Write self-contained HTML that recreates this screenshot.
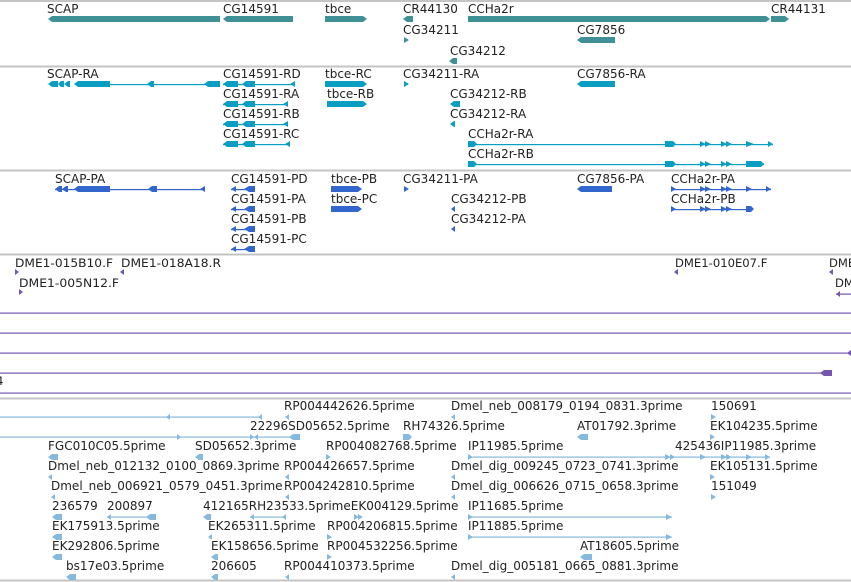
<!DOCTYPE html>
<html><head><meta charset="utf-8"><style>
html,body{margin:0;padding:0;background:#fff;width:851px;height:582px;overflow:hidden}
svg{display:block}
text{font-family:"DejaVu Sans","Liberation Sans",sans-serif;font-size:12px;fill:#222}
.c{font-size:11.6px}
</style></head><body>
<svg width="851" height="582" viewBox="0 0 851 582" xmlns="http://www.w3.org/2000/svg">
<defs>
<polygon id="ar" points="0,-3 5,0 0,3"/>
<polygon id="al" points="5,-3 0,0 5,3"/>
</defs>
<!-- track separators -->
<g stroke="#c4c4c4" stroke-width="2">
<line x1="0" y1="1" x2="851" y2="1"/>
<line x1="0" y1="66.5" x2="851" y2="66.5"/>
<line x1="0" y1="170.5" x2="851" y2="170.5"/>
<line x1="0" y1="254.5" x2="851" y2="254.5"/>
<line x1="0" y1="398.5" x2="851" y2="398.5"/>
<line x1="0" y1="580.5" x2="851" y2="580.5"/>
</g>

<!-- TRACK 1 teal -->
<g fill="#3f9196">
<polygon points="52,16 220,16 220,22 52,22 48,19"/>
<polygon points="227,16 293,16 293,22 227,22 223,19"/>
<polygon points="325,16 363,16 367,19 363,22 325,22"/>
<polygon points="407,16 413,16 413,22 407,22 403,19"/>
<polygon points="404,37 409,40 404,43"/>
<polygon points="468,16 766,16 770,19 766,22 468,22"/>
<polygon points="771,16 785,16 789,19 785,22 771,22"/>
<polygon points="581,37 615,37 615,43 581,43 577,40"/>
<polygon points="453,58 457,58 457,64 453,64 449,61"/>
</g>
<text x="47" y="13">SCAP</text>
<text x="223" y="13">CG14591</text>
<text x="325" y="13">tbce</text>
<text x="403" y="13">CR44130</text>
<text x="468" y="13">CCHa2r</text>
<text x="771" y="13">CR44131</text>
<text x="403" y="34">CG34211</text>
<text x="577" y="34">CG7856</text>
<text x="450" y="55">CG34212</text>

<!-- TRACK 2 cyan -->
<g fill="#0a9fc2" stroke="none">
<rect x="110" y="84" width="110" height="1.2"/>
<polygon points="52,81 58,81 58,87 52,87 48,84"/>
<polygon points="61,81 64,81 64,87 61,87 58,84"/>
<polygon points="68,81 70,81 70,87 68,87 64,84"/>
<polygon points="78,81 110,81 110,87 78,87 74,84"/>
<polygon points="151,81 154,81 154,87 151,87 147,84"/>
<polygon points="208,81 220,81 220,87 208,87 204,84"/>
<rect x="223" y="84" width="72" height="1.2"/><polygon points="227,81 238,81 238,87 227,87 223,84"/><polygon points="246,81 255,81 255,87 246,87 242,84"/><polygon points="290,84 295,81 295,87"/>
<rect x="223" y="104" width="65" height="1.2"/><polygon points="227,101 238,101 238,107 227,107 223,104"/><polygon points="246,101 255,101 255,107 246,107 242,104"/><polygon points="283,104 288,101 288,107"/>
<rect x="223" y="124" width="65" height="1.2"/><polygon points="227,121 238,121 238,127 227,127 223,124"/><polygon points="246,121 255,121 255,127 246,127 242,124"/><polygon points="283,124 288,121 288,127"/>
<rect x="223" y="144" width="67" height="1.2"/><polygon points="227,141 238,141 238,147 227,147 223,144"/><polygon points="246,141 255,141 255,147 246,147 242,144"/><polygon points="285,144 290,141 290,147"/>
<polygon points="325,81 363,81 367,84 363,87 325,87"/>
<polygon points="327,101 363,101 367,104 363,107 327,107"/>
<polygon points="404,81 409,84 404,87"/>
<polygon points="581,81 615,81 615,87 581,87 577,84"/>
<polygon points="454,101 460,101 460,107 454,107 450,104"/>
<polygon points="454,121 455,121 455,127 454,127 450,124"/>
<rect x="468" y="144" width="305" height="1.2"/>
<polygon points="468,141 474,141 477,144 474,147 468,147"/>
<polygon points="665,141 673,141 676,144 673,147 665,147"/>
<polygon points="700,141 706,144 700,147"/><polygon points="705,141 711,144 705,147"/>
<polygon points="721,141 727,144 721,147"/><polygon points="726,141 732,144 726,147"/>
<polygon points="746,141 754,144 746,147"/><polygon points="768,141 773,144 768,147"/>
<rect x="468" y="164" width="296" height="1.2"/>
<polygon points="468,161 474,161 477,164 474,167 468,167"/>
<polygon points="665,161 673,161 676,164 673,167 665,167"/>
<polygon points="700,161 706,164 700,167"/><polygon points="705,161 711,164 705,167"/>
<polygon points="721,161 727,164 721,167"/><polygon points="726,161 732,164 726,167"/>
<polygon points="746,161 761,161 764,164 761,167 746,167"/>
</g>
<text x="47" y="78">SCAP-RA</text>
<text x="223" y="78">CG14591-RD</text>
<text x="223" y="98">CG14591-RA</text>
<text x="223" y="118">CG14591-RB</text>
<text x="223" y="138">CG14591-RC</text>
<text x="325" y="78">tbce-RC</text>
<text x="327" y="98">tbce-RB</text>
<text x="403" y="78">CG34211-RA</text>
<text x="577" y="78">CG7856-RA</text>
<text x="450" y="98">CG34212-RB</text>
<text x="450" y="118">CG34212-RA</text>
<text x="468" y="138">CCHa2r-RA</text>
<text x="468" y="158">CCHa2r-RB</text>

<!-- TRACK 3 blue -->
<g fill="#3366cc">
<rect x="55" y="189" width="150" height="1.2"/>
<polygon points="59,186 62,186 62,192 59,192 55,189"/><polygon points="66,186 68,186 68,192 66,192 62,189"/>
<polygon points="78,186 110,186 110,192 78,192 74,189"/>
<polygon points="152,186 157,186 157,192 152,192 148,189"/>
<polygon points="200,189 205,186 205,192"/>
<rect x="231" y="189" width="24" height="1.2"/><polygon points="231,189 236,186 236,192"/><polygon points="244,189 249,186 255,186 255,192 249,192"/>
<rect x="231" y="209" width="24" height="1.2"/><polygon points="231,209 236,206 236,212"/><polygon points="244,209 249,206 255,206 255,212 249,212"/>
<rect x="231" y="229" width="24" height="1.2"/><polygon points="231,229 236,226 236,232"/><polygon points="244,229 249,226 255,226 255,232 249,232"/>
<rect x="231" y="249" width="24" height="1.2"/><polygon points="231,249 236,246 236,252"/><polygon points="244,249 249,246 255,246 255,252 249,252"/>
<polygon points="331,186 358,186 362,189 358,192 331,192"/>
<polygon points="331,206 358,206 362,209 358,212 331,212"/>
<polygon points="404,186 409,189 404,192"/>
<polygon points="581,186 612,186 612,192 581,192 577,189"/>
<polygon points="451,209 455,206 455,212"/>
<polygon points="451,229 455,226 455,232"/>
<rect x="671" y="189" width="100" height="1.2"/>
<polygon points="671,186 676,189 671,192"/><polygon points="700,186 706,189 700,192"/><polygon points="705,186 711,189 705,192"/><polygon points="721,186 727,189 721,192"/><polygon points="726,186 732,189 726,192"/><polygon points="746,186 752,189 746,192"/><polygon points="766,186 771,189 766,192"/>
<rect x="671" y="209" width="80" height="1.2"/>
<polygon points="671,206 676,209 671,212"/><polygon points="700,206 706,209 700,212"/><polygon points="705,206 711,209 705,212"/><polygon points="721,206 727,209 721,212"/><polygon points="726,206 732,209 726,212"/><polygon points="746,206 751,206 754,209 751,212 746,212"/>
</g>
<text x="55" y="183">SCAP-PA</text>
<text x="231" y="183">CG14591-PD</text>
<text x="231" y="203">CG14591-PA</text>
<text x="231" y="223">CG14591-PB</text>
<text x="231" y="243">CG14591-PC</text>
<text x="331" y="183">tbce-PB</text>
<text x="331" y="203">tbce-PC</text>
<text x="403" y="183">CG34211-PA</text>
<text x="577" y="183">CG7856-PA</text>
<text x="451" y="203">CG34212-PB</text>
<text x="451" y="223">CG34212-PA</text>
<text x="671" y="183">CCHa2r-PA</text>
<text x="671" y="203">CCHa2r-PB</text>

<!-- TRACK 4 purple -->
<g fill="#7356ad">
<polygon points="15,269 19,272 15,275"/>
<polygon points="124,269 120,272 124,275"/>
<polygon points="19,289 23,292 19,295"/>
<polygon points="678,269 674,272 678,275"/>
<polygon points="833,269 829,272 833,275"/>
<polygon points="840,291 836,294 840,297"/><rect x="836" y="293.5" width="15" height="1.2"/>
<rect x="0" y="312.5" width="851" height="1.2"/>
<rect x="0" y="332.5" width="851" height="1.2"/>
<rect x="0" y="352.5" width="851" height="1.2"/><polygon points="851,350 847,353 851,356"/>
<rect x="0" y="372.5" width="832" height="1.2"/><polygon points="824,370 832,370 832,376 824,376 820,373"/>
<rect x="0" y="392.5" width="851" height="1.2"/>
</g>
<g class="c">
<text class="c" x="15" y="267" textLength="98" lengthAdjust="spacingAndGlyphs">DME1-015B10.F</text>
<text class="c" x="121" y="267" textLength="100" lengthAdjust="spacingAndGlyphs">DME1-018A18.R</text>
<text class="c" x="19" y="287" textLength="100" lengthAdjust="spacingAndGlyphs">DME1-005N12.F</text>
<text class="c" x="675" y="267">DME1-010E07.F</text>
<text class="c" x="829" y="267">DME1-010E07.F</text>
<text class="c" x="835" y="287">DME1-005N12.F</text>
<text class="c" x="-4" y="385">4</text>
</g>

<!-- TRACK 5 light blue ESTs -->
<g fill="#86b9de">
<rect x="0" y="416.5" width="262" height="1.2"/><polygon points="170,414 166,417 170,420"/><polygon points="262,414 258,417 262,420"/>
<rect x="0" y="436.5" width="300" height="1.2"/><polygon points="177,434 181,437 177,440"/><polygon points="250,434 254,437 250,440"/><polygon points="258,434 254,437 258,440"/><polygon points="293,434 300,434 300,440 293,440 289,437"/>
<polygon points="289,414 285,417 289,420"/>
<polygon points="52,454 58,454 58,460 52,460 48,457"/>
<polygon points="199,454 203,454 203,460 199,460 195,457"/>
<polygon points="326,454 331,457 326,460"/>
<polygon points="52,474 48,477 52,480"/>
<polygon points="289,474 285,477 289,480"/>
<polygon points="55,494 51,497 55,500"/>
<polygon points="289,494 285,497 289,500"/>
<polygon points="56,514 62,514 62,520 56,520 52,517"/>
<rect x="107" y="516.5" width="48" height="1.2"/><polygon points="111,514 107,517 111,520"/><polygon points="150,514 156,514 156,520 150,520 146,517"/>
<polygon points="207,514 211,514 211,520 207,520 203,517"/>
<rect x="250" y="516.5" width="36" height="1.2"/><polygon points="254,514 250,517 254,520"/><polygon points="286,514 282,517 286,520"/>
<polygon points="354,514 359,517 354,520"/><polygon points="358,514 363,517 358,520"/>
<polygon points="56,534 62,534 62,540 56,540 52,537"/>
<polygon points="212,534 208,537 212,540"/>
<polygon points="327,534 332,537 327,540"/>
<polygon points="56,554 62,554 62,560 56,560 52,557"/>
<polygon points="215,554 218,554 218,560 215,560 211,557"/>
<polygon points="327,554 332,557 327,560"/>
<polygon points="70,574 76,574 76,580 70,580 66,577"/>
<polygon points="215,574 218,574 218,580 215,580 211,577"/>
<polygon points="289,574 285,577 289,580"/>
<polygon points="403,434 409,434 412,437 409,440 403,440"/>
<polygon points="455,414 451,417 455,420"/>
<polygon points="711,414 716,417 711,420"/>
<polygon points="581,434 588,434 588,440 581,440 577,437"/>
<polygon points="710,434 715,437 710,440"/>
<rect x="468" y="456.5" width="302" height="1.2"/><polygon points="468,454 473,457 468,460"/><polygon points="665,454 671,457 665,460"/><polygon points="670,454 675,457 670,460"/><polygon points="700,454 706,457 700,460"/><polygon points="721,454 727,457 721,460"/><polygon points="726,454 732,457 726,460"/><polygon points="746,454 752,457 746,460"/><polygon points="765,454 770,457 765,460"/>
<polygon points="455,474 451,477 455,480"/>
<polygon points="710,474 715,477 710,480"/>
<polygon points="455,494 451,497 455,500"/>
<polygon points="711,494 716,497 711,500"/>
<rect x="468" y="516.5" width="204" height="1.2"/><polygon points="468,514 473,517 468,520"/><polygon points="666,514 672,517 666,520"/>
<rect x="468" y="536.5" width="204" height="1.2"/><polygon points="468,534 473,537 468,540"/><polygon points="666,534 672,537 666,540"/>
<polygon points="584,554 592,554 592,560 584,560 580,557"/>
<polygon points="455,574 451,577 455,580"/>
</g>
<text x="284" y="410">RP004442626.5prime</text>
<text x="451" y="410">Dmel_neb_008179_0194_0831.3prime</text>
<text x="711" y="410">150691</text>
<text x="250" y="430">22296SD05652.5prime</text>
<text x="403" y="430">RH74326.5prime</text>
<text x="577" y="430">AT01792.3prime</text>
<text x="710" y="430">EK104235.5prime</text>
<text x="48" y="450">FGC010C05.5prime</text>
<text x="195" y="450">SD05652.3prime</text>
<text x="326" y="450">RP004082768.5prime</text>
<text x="468" y="450">IP11985.5prime</text>
<text x="675" y="450">425436IP11985.3prime</text>
<text x="48" y="470">Dmel_neb_012132_0100_0869.3prime</text>
<text x="284" y="470">RP004426657.5prime</text>
<text x="451" y="470">Dmel_dig_009245_0723_0741.3prime</text>
<text x="710" y="470">EK105131.5prime</text>
<text x="51" y="490">Dmel_neb_006921_0579_0451.3prime</text>
<text x="284" y="490">RP004242810.5prime</text>
<text x="451" y="490">Dmel_dig_006626_0715_0658.3prime</text>
<text x="711" y="490">151049</text>
<text x="52" y="510">236579</text>
<text x="107" y="510">200897</text>
<text x="203" y="510">412165RH23533.5primeEK004129.5prime</text>
<text x="468" y="510">IP11685.5prime</text>
<text x="52" y="530">EK175913.5prime</text>
<text x="208" y="530">EK265311.5prime</text>
<text x="327" y="530">RP004206815.5prime</text>
<text x="468" y="530">IP11885.5prime</text>
<text x="52" y="550">EK292806.5prime</text>
<text x="211" y="550">EK158656.5prime</text>
<text x="327" y="550">RP004532256.5prime</text>
<text x="580" y="550">AT18605.5prime</text>
<text x="66" y="570">bs17e03.5prime</text>
<text x="211" y="570">206605</text>
<text x="284" y="570">RP004410373.5prime</text>
<text x="451" y="570">Dmel_dig_005181_0665_0881.3prime</text>
</svg>
</body></html>
